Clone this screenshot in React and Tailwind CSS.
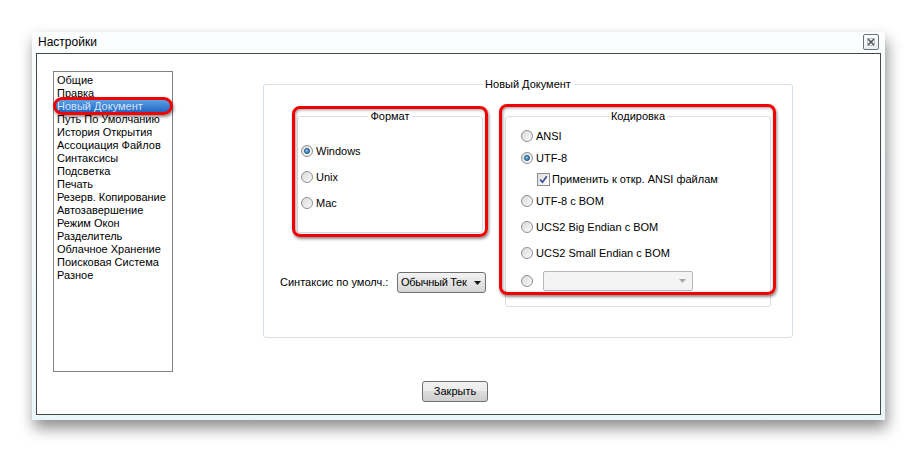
import React from 'react';

const sections = [
  'Общие',
  'Правка',
  'Новый Документ',
  'Путь По Умолчанию',
  'История Открытия',
  'Ассоциация Файлов',
  'Синтаксисы',
  'Подсветка',
  'Печать',
  'Резерв. Копирование',
  'Автозавершение',
  'Режим Окон',
  'Разделитель',
  'Облачное Хранение',
  'Поисковая Система',
  'Разное',
];

function Radio({ checked }) {
  return (
    <div className="w-[12px] h-[12px] shrink-0 rounded-full border border-[#8e8f8f] bg-[linear-gradient(135deg,#d9d9d9,#fbfbfb)] flex items-center justify-center">
      {checked && (
        <div className="w-[6px] h-[6px] rounded-full border border-[#16507f] bg-[radial-gradient(circle_at_35%_35%,#8ccbf2,#1c6cab)]" />
      )}
    </div>
  );
}

function RedMark({ className }) {
  return (
    <div
      className={
        'absolute pointer-events-none border-[3px] border-[#f20000] rounded-[8px] shadow-[1px_2px_3px_rgba(0,0,0,0.45),inset_1px_1px_3px_rgba(0,0,0,0.4)] ' +
        className
      }
    />
  );
}

function Arrow({ color }) {
  return (
    <svg width="7" height="4" viewBox="0 0 7 4">
      <path d="M0 0 L7 0 L3.5 4 Z" fill={color} />
    </svg>
  );
}

export default function App() {
  return (
    <div className="w-[917px] h-[453px] bg-white pt-[32px] pl-[32px] font-['Liberation_Sans',Arial,sans-serif] text-[11px] leading-[13px] text-black">
      <div className="w-[853px] h-[388px] bg-[linear-gradient(180deg,#fbfdfe,#eaf7f9)] flex flex-col px-[4px] pb-[5px] shadow-[2px_8px_14px_rgba(0,0,0,0.45)]">
        {/* title bar */}
        <div className="h-[21px] flex items-start justify-between pl-[2px] pr-[2px]">
          <span className="text-[12px] leading-[15px] mt-[3px]">Настройки</span>
          <div className="mt-[2px] w-[16px] h-[16px] rounded-[2px] border border-[#6b7378] bg-[linear-gradient(180deg,#ffffff,#e9eef1)] flex items-center justify-center">
            <svg width="8" height="8" viewBox="0 0 8 8">
              <path d="M1 1 L7 7 M7 1 L1 7" stroke="#555" strokeWidth="1.6" />
              <rect x="0.5" y="0.5" width="7" height="7" fill="none" stroke="#999" strokeWidth="0.6" />
            </svg>
          </div>
        </div>

        {/* client area */}
        <div className="flex-1 border border-[#474747] bg-white flex flex-col">
          <div className="flex items-start">
            {/* section list */}
            <div className="ml-[16px] mt-[17px] w-[120px] h-[301px] border border-[#828282] pt-[2px] pl-[3px]">
              {sections.map((s, i) =>
                i === 2 ? (
                  <div key={s} className="relative h-[13px] -ml-[3px]">
                    <div className="absolute left-[-1px] right-[-1px] top-[-3px] bottom-[-2px] rounded-[9px] border-[3px] border-[#f20000] bg-[linear-gradient(180deg,#5aa0e6,#2466c2)] shadow-[1px_2px_3px_rgba(0,0,0,0.45)]" />
                    <span className="relative pl-[3px] text-[#d5e6f8] whitespace-nowrap">{s}</span>
                  </div>
                ) : (
                  <div key={s} className="h-[13px] whitespace-nowrap">
                    {s}
                  </div>
                )
              )}
            </div>

            {/* Новый Документ group */}
            <fieldset className="ml-[90px] mt-[24px] w-[530px] h-[260px] border border-[#d5dfe5] rounded-[3px]">
              <legend className="mx-auto px-[3px] leading-[13px]">Новый Документ</legend>
              <div className="flex items-start pl-[16px]">
                <div className="w-[206px] shrink-0">
                  <div className="relative ml-[17px] mt-[19px] w-[186px]">
                    <fieldset className="h-[123px] border border-[#d5dfe5] rounded-[3px]">
                      <legend className="mx-auto px-[2px] leading-[13px]">Формат</legend>
                      <div className="pt-[21px] pl-[3px]">
                        {['Windows', 'Unix', 'Mac'].map((t, i) => (
                          <div key={t} className={'h-[14px] flex items-center gap-[3px] ' + (i ? 'mt-[12px]' : '')}>
                            <Radio checked={i === 0} />
                            <span>{t}</span>
                          </div>
                        ))}
                      </div>
                    </fieldset>
                    <RedMark className="-left-[5px] -right-[5px] -top-[4px] -bottom-[4px]" />
                  </div>

                  <div className="mt-[39px] h-[21px] flex items-center">
                    <span className="w-[117px] shrink-0 whitespace-nowrap">Синтаксис по умолч.:</span>
                    <div className="w-[89px] h-[21px] rounded-[3px] border border-[#707070] bg-[linear-gradient(180deg,#f3f3f3,#e4e4e4_50%,#d6d6d6)] flex items-center pl-[3px] pr-[4px]">
                      <span className="whitespace-nowrap tracking-[-0.3px]">Обычный Тек</span>
                      <div className="ml-auto flex">
                        <Arrow color="#111" />
                      </div>
                    </div>
                  </div>
                </div>

                <div className="relative ml-[19px] mt-[19px] w-[266px]">
                  <fieldset className="h-[197px] border border-[#d5dfe5] rounded-[3px]">
                    <legend className="mx-auto px-[2px] leading-[13px]">Кодировка</legend>
                    <div className="pt-[6px] pl-[15px]">
                      <div className="h-[14px] flex items-center gap-[3px]">
                        <Radio />
                        <span>ANSI</span>
                      </div>
                      <div className="mt-[8px] h-[14px] flex items-center gap-[3px]">
                        <Radio checked />
                        <span>UTF-8</span>
                      </div>
                      <div className="mt-[7px] h-[14px] flex items-center gap-[2px] pl-[16px]">
                        <div className="w-[13px] h-[13px] border border-[#8e8f8f] bg-[linear-gradient(135deg,#dcdcdc,#ffffff)] flex items-center justify-center">
                          <svg width="9" height="9" viewBox="0 0 9 9">
                            <path d="M1.2 4.6 L3.5 7.2 L7.8 1.3" fill="none" stroke="#3a4f92" strokeWidth="1.7" />
                          </svg>
                        </div>
                        <span>Применить к откр. ANSI файлам</span>
                      </div>
                      <div className="mt-[8px] h-[14px] flex items-center gap-[3px]">
                        <Radio />
                        <span>UTF-8 с BOM</span>
                      </div>
                      <div className="mt-[12px] h-[14px] flex items-center gap-[3px]">
                        <Radio />
                        <span>UCS2 Big Endian с BOM</span>
                      </div>
                      <div className="mt-[12px] h-[14px] flex items-center gap-[3px]">
                        <Radio />
                        <span>UCS2 Small Endian с BOM</span>
                      </div>
                      <div className="mt-[11px] h-[20px] flex items-center gap-[10px]">
                        <Radio />
                        <div className="w-[150px] h-[20px] rounded-[2px] border border-[#b4b8bb] bg-[#f4f4f4] flex items-center justify-end pr-[6px]">
                          <Arrow color="#a8a8a8" />
                        </div>
                      </div>
                    </div>
                  </fieldset>
                  <RedMark className="-left-[6px] -right-[5px] -top-[6px] bottom-[12px]" />
                </div>
              </div>
            </fieldset>
          </div>

          <button className="ml-[385px] mt-[9px] w-[66px] h-[21px] rounded-[3px] border border-[#707070] bg-[linear-gradient(180deg,#f2f2f2,#ebebeb_45%,#dddddd_50%,#cfcfcf)] flex items-center justify-center">
            Закрыть
          </button>
        </div>
      </div>
    </div>
  );
}
